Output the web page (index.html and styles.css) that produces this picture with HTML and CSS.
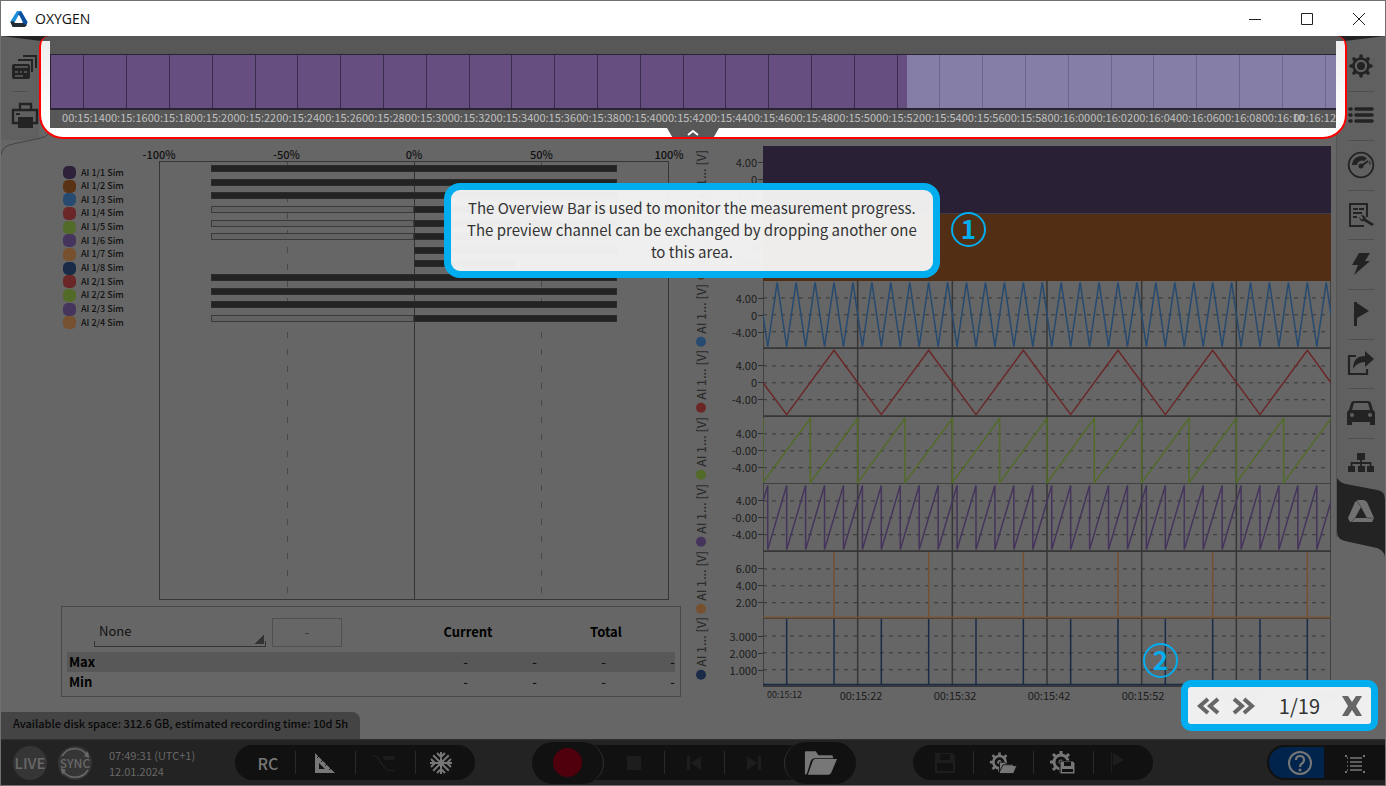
FILE: index.html
```html
<!DOCTYPE html>
<html lang="en">
<head>
  <meta charset="UTF-8" />
  <meta name="viewport" content="width=device-width, initial-scale=1.0"/>
  <title>OXYGEN</title>
  <link rel="stylesheet" href="styles.css">
</head>
<body>
  <div class="window">
    <header class="titlebar">
      <svg class="logo" viewBox="0 0 18 16">
        <path d="M7 0h4l4 7-3.500 1L9 3.500 6 9l-3 5-2-1.500-.6-2z" fill="#1c8fd6"/>
        <path d="M11 0l6.600 11-1.500 4-3-1-2-6L8 3z" fill="#0b4f9e"/>
        <path d="M.4 11L3 10l2 2h8l3.600 2-1.600 2H2.500z" fill="#222b36"/>
        <path d="M9 4l4 7.500H5z" fill="#fff"/>
      </svg>
      <h1>OXYGEN</h1>
      <div class="window-buttons">
        <button aria-label="Minimize"><svg viewBox="0 0 12 12"><path d="M0 6.500h12"/></svg></button>
        <button aria-label="Maximize"><svg viewBox="0 0 12 12"><path d="M.5.5h11v11H.5z"/></svg></button>
        <button aria-label="Close"><svg viewBox="0 0 12 12"><path d="M0 0l12 12M12 0L0 12"/></svg></button>
      </div>
    </header>

    <main class="stage">
      <nav class="rail rail-left">
        <svg class="rail-edge" viewBox="0 0 48 120"><path class="edge-top" d="M0 0h48v6z"/><path class="edge-line" d="M0 119q1-9 12-11l28-6q5-1 7-4"/></svg>
        <button aria-label="Screens">
          <svg viewBox="0 0 28 28"><path d="M12 2h14v13h-2V4H12zM7 6h15v13h-2V8H7z"/><path d="M3 11h14q2 0 2 2v11q0 2-2 2H3q-2 0-2-2V13q0-2 2-2z"/><path d="M4 14h13M4 19h3M9 19h2M13 19h3M4 23h8" stroke="#606060" stroke-width="1.500"/></svg>
        </button>
        <button aria-label="Print">
          <svg viewBox="0 0 28 28"><path d="M2 8h24v13H2z M9 2h11v6H9z" fill="none" stroke="#232323" stroke-width="2.400"/><path d="M7 15h15v11H7zM5 11h4v2H5z"/></svg>
        </button>
      </nav>

      <div class="center">
        <section class="overview">
          <div class="overview-panel">
            <div class="overview-track" id="track"></div>
            <div class="overview-times" id="times"></div>
          </div>
          <button class="overview-handle" aria-label="Collapse overview"><svg viewBox="0 0 12 7"><path d="M1 6l5-4 5 4"/></svg></button>
        </section>

        <div class="instruments">
          <section class="left-column">
            <div class="meter">
              <ul class="legend" id="legend"></ul>
              <div class="meter-main">
                <div class="meter-axis"><span>-100%</span><span>-50%</span><span>0%</span><span>50%</span><span>100%</span></div>
                <div class="meter-plot"><div class="meter-grid"><i></i><i></i><i></i><i></i></div><div class="bars" id="bars"></div></div>
              </div>
            </div>
            <div class="stats">
              <table>
                <colgroup><col><col class="value"><col class="value"><col class="value"><col class="value"></colgroup>
                <thead>
                  <tr>
                    <th>
                      <div class="stats-tools">
                        <select aria-label="Channel"><option>None</option></select>
                        <button>-</button>
                      </div>
                    </th>
                    <th colspan="2">Current</th>
                    <th colspan="2">Total</th>
                  </tr>
                </thead>
                <tbody>
                  <tr><th>Max</th><td>-</td><td>-</td><td>-</td><td>-</td></tr>
                  <tr><th>Min</th><td>-</td><td>-</td><td>-</td><td>-</td></tr>
                </tbody>
              </table>
            </div>
          </section>

          <section class="recorder">
            <div class="recorder-body">
              <div class="lane-names" id="names"></div>
              <div class="lanes" id="lanes"></div>
            </div>
            <div class="time-axis"><span>00:15:12</span><span>00:15:22</span><span>00:15:32</span><span>00:15:42</span><span>00:15:52</span><span>00:16:02</span><span>00:16:12</span></div>
          </section>
        </div>
      </div>

      <nav class="rail rail-right">
        <svg class="rail-edge" viewBox="0 0 48 120"><path class="edge-top" d="M0 6L48 0H0z"/></svg>
        <button aria-label="Settings">
          <svg viewBox="0 0 28 28"><circle cx="14" cy="14" r="7.500" fill="none" stroke="#232323" stroke-width="2.600"/><circle cx="14" cy="14" r="4"/><path d="M14 4v2M14 22v2M4 14h2M22 14h2M7 7l1 1M20 20l1 1M7 21l1-1M20 8l1-1" stroke="#232323" stroke-width="3.600" stroke-linecap="round"/></svg>
        </button>
        <button aria-label="Channel list">
          <svg viewBox="0 0 28 28"><path d="M9 8h16M9 14h16M9 20h16M3 8h1M3 14h1M3 20h1" stroke="#232323" stroke-width="3.600" stroke-linecap="round"/></svg>
        </button>
        <button aria-label="Instruments">
          <svg viewBox="0 0 28 28"><circle cx="14" cy="14" r="12.300" fill="none" stroke="#232323" stroke-width="1.800"/><path d="M5 14a9 9 0 0 1 15-6.500L17 10a5 5 0 0 0-7 4z"/><path d="M13 16l8-6" stroke="#232323" stroke-width="2"/><circle cx="14" cy="15" r="2.500"/><path d="M22 10l1.500 3.500" stroke="#3c3c3c" stroke-width="2"/></svg>
        </button>
        <button aria-label="Report">
          <svg viewBox="0 0 28 28"><path d="M20 16V3H3v22h14" fill="none" stroke="#232323" stroke-width="2"/><path d="M6 8h5M12 8h5M6 12h9M6 16h4" stroke="#232323" stroke-width="1.800"/><path d="M12 16q1 5 5 4l8 5 2-2-8-5q-1-4-5-4l2 3-1 2z"/></svg>
        </button>
        <button aria-label="Triggers">
          <svg viewBox="0 0 28 28"><path d="M12 3h11l-5 8h5L7 25l4-10H5z"/></svg>
        </button>
        <button aria-label="Events">
          <svg viewBox="0 0 28 28"><path d="M7 2h3v24H7zM10 3l12 8-12 7z"/></svg>
        </button>
        <button aria-label="Export">
          <svg viewBox="0 0 28 28"><path d="M9 7H2v18h18v-5" fill="none" stroke="#232323" stroke-width="2.200"/><path d="M6 20q0-13 12-13V2l9 8-9 8v-5q-8 0-12 7z"/></svg>
        </button>
        <button aria-label="Vehicle">
          <svg viewBox="0 0 28 28"><path fill-rule="evenodd" d="M7 2h14q2 0 3 2l2 7q2 1 2 3v12h-5v-3H5v3H0V14q0-2 2-3l2-7q1-2 3-2zm0 2l-2 7h18l-2-7zM5 14a2 2 0 1 0 0 4 2 2 0 0 0 0-4zm18 0a2 2 0 1 0 0 4 2 2 0 0 0 0-4z"/></svg>
        </button>
        <button aria-label="Network">
          <svg viewBox="0 0 28 28"><path d="M10 4h8v7h-8zM1 17h7v6H1zM11 17h7v6h-7zM20 17h7v6h-7z"/><path d="M14 11v6M4.500 17v-3h19v3" fill="none" stroke="#232323" stroke-width="1.800"/></svg>
        </button>
        <button class="active" aria-label="OXYGEN">
          <svg class="tab" viewBox="0 0 48 78" preserveAspectRatio="none"><path d="M0 0q3 5 9 6l31 6q8 1 8 9v57q-2-6-8-8L8 63q-8-2-8-9z"/></svg>
          <svg viewBox="0 0 28 28"><path fill="#717171" d="M11 2h6l3 2 7 16-2 4H3l-2-4L8 4z"/><path fill="#232323" d="M14 9l6 11H8z"/><path d="M14 9l-4-6M20 20h6M8 20l-4 4" stroke="#4a4a4a"/></svg>
        </button>
      </nav>
    </main>

    <div class="disk-row"><p>Available disk space: 312.6 GB, estimated recording time: 10d 5h</p></div>

    <footer class="toolbar">
      <div class="system">
        <button class="round">LIVE</button>
        <button class="round sync"><svg viewBox="0 0 34 34"><path d="M4 10a15 15 0 0 1 25-1M30 24a15 15 0 0 1-25 1" fill="none" stroke="#686868" stroke-width="1.500"/><path d="M31 12l-1-7-4 5zM3 22l1 7 4-5z" fill="#686868"/></svg>SYNC</button>
        <p>07:49:31 (UTC+1)<br>12.01.2024</p>
      </div>
      <div class="pill pill-a">
        <button class="rc">RC</button>
        <button aria-label="Set square"><svg viewBox="0 0 28 28"><path fill-rule="evenodd" d="M4 4l20 20H4zm4 10v6h6z"/><path d="M8 7l-2 2M12 11l-2 2M16 15l-2 2M20 19l-2 2" stroke="#111"/></svg></button>
        <button aria-label="Filter" class="off"><svg viewBox="0 0 36 28"><path d="M0 4q8 0 12 8t10 11q4 1 9 1" fill="none" stroke="#222" stroke-width="1.500"/><path d="M16 5h14v5H16z" fill="#1d1d1d"/></svg></button>
        <button aria-label="Freeze"><svg viewBox="0 0 28 28"><path d="M14 3v22M3 14h22M6.200 6.200l15.600 15.600M6.200 21.800L21.800 6.200M10 4l4 4 4-4M10 24l4-4 4 4M4 10l4 4-4 4M24 10l-4 4 4 4" fill="none" stroke="#777" stroke-width="2"/></svg></button>
      </div>
      <div class="transport">
        <button class="lobe lobe-left" aria-label="Record"><i class="record"></i></button>
        <div class="pill pill-mid">
          <button aria-label="Stop" class="off"><svg viewBox="0 0 28 28"><path d="M7 7h14v14H7z"/></svg></button>
          <button aria-label="Previous" class="off"><svg viewBox="0 0 28 28"><path d="M7 7h3v14H7zM21 7v14l-10-7z"/></svg></button>
          <button aria-label="Next" class="off"><svg viewBox="0 0 28 28"><path d="M18 7h3v14h-3zM7 7v14l10-7z"/></svg></button>
        </div>
        <button class="lobe lobe-right" aria-label="Open file"><svg viewBox="0 0 36 28"><path d="M2 26V3q0-1 1-1h10l3 4h13q2 0 2 2v1H12q-3 0-4 3L4 25z"/><path d="M12 10h23l-6 14q-1 2-3 2H5l5-14q1-2 2-2z"/></svg></button>
      </div>
      <div class="pill pill-b">
        <button aria-label="Save" class="off"><svg viewBox="0 0 28 28"><path fill-rule="evenodd" d="M4 4h17l3 3v17H4zm5 1v6h10V5zm-3 9v8h16v-8z"/></svg></button>
        <button aria-label="Load setup"><svg viewBox="0 0 32 28"><circle cx="12" cy="13" r="7" fill="none" stroke="#777" stroke-width="3"/><circle cx="12" cy="13" r="2.500"/><path d="M12 2v4M1 13h4M4 5l3 3M20 5l-3 3M4 21l3-3M12 20v4" stroke="#777" stroke-width="3"/><path d="M12 25V13h6l2 2h8v2h4l-4 9H12z" stroke="#111"/><path d="M12 24l4-8h14" fill="none" stroke="#111"/></svg></button>
        <button aria-label="Save setup"><svg viewBox="0 0 28 28"><circle cx="12" cy="13" r="7" fill="none" stroke="#777" stroke-width="3"/><circle cx="12" cy="13" r="2.500"/><path d="M12 2v4M1 13h4M4 5l3 3M20 5l-3 3M4 21l3-3M12 20v4" stroke="#777" stroke-width="3"/><path d="M11 12h13l2 2v11H11z" stroke="#111"/><path d="M15 13h7v4h-7zM13 20h11v3H13z" fill="#111"/></svg></button>
        <button aria-label="Marker" class="off"><svg viewBox="0 0 28 28"><path d="M6 3h1v21H6zM8 4l11 7-11 6z"/></svg></button>
      </div>
      <div class="help">
        <button class="help-button" aria-label="Help"><svg viewBox="0 0 28 28"><circle cx="14" cy="14" r="11" fill="none" stroke="#777" stroke-width="2"/><path d="M10 11q0-4 4-4t4 4q0 2-2 3.500-2 1-2 3.500" fill="none" stroke="#777" stroke-width="2.200"/><circle cx="14" cy="21" r="1.500"/></svg></button>
        <button aria-label="Menu"><svg viewBox="0 0 28 28"><path d="M9 9h12M9 13h12M9 17h12M9 21h12M6 9h1M6 13h1M6 17h1M6 21h1" stroke="#777" stroke-width="1.600"/><path d="M4 7h2M22 7h2M4 23h2M22 23h2" stroke="#777" stroke-width="2"/></svg></button>
      </div>
    </footer>

    <div class="hint hint-text">The Overview Bar is used to monitor the measurement progress.<br>The preview channel can be exchanged by dropping another one<br>to this area.</div>
    <div class="step step-one">1</div>
    <div class="hint pager">
      <button aria-label="Previous hint"><svg viewBox="0 0 24 18"><path d="M12 2L4 9l8 7M22 2l-8 7 8 7"/></svg></button>
      <button aria-label="Next hint"><svg viewBox="0 0 24 18"><path d="M2 2l8 7-8 7M12 2l8 7-8 7"/></svg></button>
      <span>1/19</span>
      <button aria-label="Close hint"><svg class="cross" viewBox="0 0 20 20"><path d="M0 0h6l4 6 4-6h6l-6 10 6 10h-6l-4-6-4 6H0l6-10z"/></svg></button>
    </div>
    <div class="step step-two">2</div>
  </div>
  <script src="script.js"></script>
</body>
</html>
```
FILE: styles.css
```css
* {
  box-sizing: border-box;
  margin: 0;
  padding: 0;
}
body {
  font-family: "Noto Sans CJK SC", "Open Sans", sans-serif;
  font-size: 11px;
  line-height: 16px;
  color: #111;
  background: #666;
}
button {
  font: inherit;
  color: inherit;
  background: none;
  border: none;
  cursor: pointer;
}
svg {
  display: block;
}
.window {
  position: relative;
  display: flex;
  flex-direction: column;
  min-height: 100vh;
  border: 1px solid #707070;
  background: #666;
  overflow: hidden;
}

/* title bar */
.titlebar {
  display: flex;
  align-items: center;
  height: 35px;
  padding-left: 9px;
  background: #fff;
}
.logo {
  width: 18px;
  height: 16px;
  margin-right: 7px;
}
.titlebar h1 {
  font: 14px "Open Sans", sans-serif;
  color: #111;
}
.window-buttons {
  display: flex;
  margin-left: auto;
}
.window-buttons button {
  display: grid;
  place-items: center;
  width: 52px;
  height: 34px;
}
.window-buttons svg {
  width: 12px;
  height: 12px;
  fill: none;
  stroke: #222;
}

/* stage */
.stage {
  display: flex;
  align-items: flex-start;
  flex: 1;
}
.center {
  display: flex;
  flex-direction: column;
  flex: 1;
  align-self: stretch;
  min-width: 0;
}
.rail {
  position: relative;
  display: grid;
  grid-auto-rows: 1fr;
  background: #606060;
}
.rail button {
  position: relative;
  display: grid;
  place-items: center;
}
.rail button + button::before {
  content: "";
  position: absolute;
  top: 0;
  left: 11px;
  right: 11px;
  height: 1px;
  background: #4f4f4f;
}
.rail button svg {
  width: 28px;
  height: 28px;
  fill: #232323;
}
.rail-left {
  width: 38px;
  height: 104px;
  padding-top: 6px;
}
.rail-left button {
  padding-left: 10px;
}
.rail-edge {
  position: absolute;
  top: 0;
  left: 0;
  width: 48px;
  height: 120px;
}
.edge-top {
  fill: #232323;
}
.edge-line {
  fill: #666;
  stroke: #444;
}
.rail-right {
  width: 49px;
  height: 501px;
  padding-top: 5px;
  border-left: 1px solid #555;
}
.rail-right .active::before {
  display: none;
}
.rail-right .active svg {
  position: relative;
}
.rail-right .active .tab {
  position: absolute;
  top: -9px;
  left: 0;
  width: 48px;
  height: 78px;
}

/* overview bar */
.overview {
  position: relative;
  z-index: 1;
  display: flex;
  flex-direction: column;
  margin-right: -11px;
  padding: 0 9px;
  border: 2px solid #f00;
  border-top: none;
  border-radius: 10px 10px 24px 24px;
  background: linear-gradient(#575757 5px, #eee 5px, #fff 90px);
}
.overview-panel {
  padding-top: 18px;
  background: #575757;
}
.overview-track {
  display: flex;
  height: 56px;
  border: 1px solid #2b2233;
  border-width: 1px 0 2px 1px;
  background: linear-gradient(to right, #664e80 66.650%, #857ea6 66.650%);
}
.overview-track i {
  flex: 0 0 3.331%;
  border-right: 1px solid #392b4a;
}
.overview-track i:first-child {
  flex-basis: 2.600%;
}
.overview-track i.ahead {
  border-color: #6c668c;
}
.overview-times {
  position: relative;
  display: flex;
  height: 18px;
  padding-left: 12px;
  line-height: 14px;
  color: #c0c0c0;
}
.overview-times span {
  display: flex;
  justify-content: center;
  flex: 0 0 3.364%;
  width: 0;
}
.overview-times span:last-child {
  position: absolute;
  right: 0;
  width: auto;
}
.overview-handle {
  align-self: center;
  display: grid;
  place-items: center;
  width: 52px;
  height: 9px;
  background: #575757;
  clip-path: polygon(0 0, 100% 0, 90% 100%, 10% 100%);
}
.overview-handle svg {
  width: 12px;
  height: 7px;
  fill: none;
  stroke: #fff;
  stroke-width: 2;
}

/* instruments */
.instruments {
  display: grid;
  grid-template-columns: 620fr 650fr;
  flex: 1;
  padding: 7px 5px 10px 22px;
}
.left-column {
  display: flex;
  flex-direction: column;
  padding-bottom: 5px;
}
.meter {
  display: flex;
  flex: 1;
  min-height: 300px;
}
.legend {
  display: grid;
  width: 98px;
  height: 164px;
  margin-top: 20px;
  list-style: none;
  font-size: 9px;
  font-weight: 500;
}
.legend li {
  display: flex;
  align-items: center;
  gap: 5px;
  height: 13px;
  padding-left: 2px;
}
.legend i {
  width: 13px;
  height: 13px;
  border-radius: 5px;
}
.meter-main {
  display: flex;
  flex-direction: column;
  flex: 1;
  margin-right: 12px;
}
.meter-axis {
  display: flex;
  justify-content: space-between;
  height: 15px;
  font-weight: 500;
}
.meter-axis span {
  display: flex;
  justify-content: center;
  width: 0;
}
.meter-plot {
  position: relative;
  flex: 1;
  border: 1px solid #363636;
}
.meter-grid {
  position: absolute;
  inset: 0;
  display: grid;
  grid-template-columns: repeat(4, 1fr);
}
.meter-grid i {
  margin-right: -1px;
  background: repeating-linear-gradient(#484848 0 6px, transparent 6px 17px) right / 1px 100% no-repeat;
}
.meter-grid i:nth-child(2) {
  background: linear-gradient(#333, #333) right / 1px 100% no-repeat;
}
.meter-grid i:last-child {
  background: none;
}
.bars {
  position: relative;
  display: grid;
  grid-auto-rows: 1fr;
  height: 163px;
}
.bar {
  display: flex;
  align-items: center;
}
.bar i {
  height: 7px;
  border: 1px solid #3a3a3a;
  background: #626262;
}
.bar i.solid {
  border-color: #2b2b2b;
  background: #232323;
}
.stats {
  margin-top: 6px;
  padding: 0 5px 4px;
  border: 1px solid #484848;
}
.stats table {
  width: 100%;
  border-collapse: collapse;
  table-layout: fixed;
  font-size: 13px;
  line-height: 20px;
}
.stats .value {
  width: 69px;
}
.stats thead th {
  height: 45px;
  padding-top: 5px;
  color: #000;
}
.stats tbody th {
  padding-left: 2px;
  text-align: left;
  color: #000;
}
.stats td {
  text-align: right;
  font-weight: 500;
}
.stats tbody tr:first-child {
  background: #585858;
}
.stats-tools {
  display: flex;
  align-items: flex-end;
  gap: 6px;
  padding-left: 27px;
}
.stats-tools select {
  width: 172px;
  height: 28px;
  padding: 0 5px 4px;
  appearance: none;
  font: 13px "Noto Sans CJK SC", sans-serif;
  color: #111;
  border: none;
  border-bottom: 1px solid #333;
  background: linear-gradient(135deg, transparent 50%, #333 50%) right 2px bottom 2px / 10px 9px no-repeat, linear-gradient(#333, #333) left bottom / 1px 5px no-repeat, linear-gradient(#333, #333) right bottom / 1px 5px no-repeat;
}
.stats-tools button {
  width: 70px;
  height: 29px;
  border: 1px solid #505050;
  color: #333;
  font-weight: 400;
}

/* recorder */
.recorder {
  display: flex;
  flex-direction: column;
  padding-left: 11px;
}
.recorder-body {
  display: flex;
  flex: 1;
}
.lane-names {
  display: grid;
  grid-auto-rows: 1fr;
  width: 18px;
  margin-bottom: 7px;
}
.lanes {
  display: grid;
  grid-auto-rows: 1fr;
  flex: 1;
}
.lane-name {
  display: flex;
  align-items: center;
  gap: 3px;
  min-height: 0;
  writing-mode: vertical-rl;
  transform: rotate(180deg);
  font-size: 12px;
  font-weight: 500;
  line-height: 18px;
  color: #2c2c2c;
  white-space: nowrap;
}
.lane-name i {
  width: 10px;
  height: 10px;
  border-radius: 50%;
}
.lane {
  display: grid;
  grid-template-columns: 53px 1fr;
}
.scale {
  display: flex;
  flex-direction: column;
  justify-content: center;
  line-height: 17px;
  color: #1c1c1c;
}
.scale span {
  display: flex;
  align-items: center;
  justify-content: flex-end;
  gap: 1px;
}
.scale span::after {
  content: "";
  width: 5px;
  height: 1px;
  background: #333;
}
.plot {
  position: relative;
}
.plot svg {
  position: absolute;
  inset: 0;
  width: 100%;
  height: 100%;
  fill: none;
  stroke-width: 1.500;
}
.plot path {
  vector-effect: non-scaling-stroke;
}
.plot .frame {
  stroke: #363636;
}
.plot .base {
  stroke: #363636;
  stroke-width: 3;
}
.plot .dashes {
  stroke: #383838;
  stroke-width: 1;
  stroke-dasharray: 4 5;
}
.time-axis {
  display: flex;
  justify-content: space-between;
  height: 15px;
  margin-left: 71px;
  color: #1c1c1c;
}
.time-axis span {
  display: flex;
  justify-content: center;
  width: 0;
}
.time-axis span:first-child {
  justify-content: flex-start;
  padding-left: 4px;
  font-size: 9px;
}

/* bottom area */
.disk-row {
  display: flex;
}
.disk-row p {
  height: 27px;
  padding: 0 12px;
  border-radius: 0 8px 0 0;
  background: #444;
  color: #080808;
  font-size: 11px;
  font-weight: 500;
  line-height: 22px;
}
.toolbar {
  display: grid;
  grid-template-columns: 234px auto 1fr auto 1fr auto 2fr auto;
  align-items: center;
  height: 46px;
  border-top: 1px solid #303030;
  background: #232323;
  color: #777;
}
.toolbar svg {
  width: 28px;
  height: 28px;
  fill: #777;
}
.toolbar button {
  display: grid;
  place-items: center;
}
.toolbar .off svg {
  fill: #1d1d1d;
}
.system {
  display: flex;
  align-items: center;
  gap: 11px;
  padding-left: 12px;
  color: #686868;
}
.system .round {
  position: relative;
  width: 34px;
  height: 34px;
  border-radius: 50%;
  background: #353535;
  font-size: 15px;
  font-weight: 500;
}
.system .sync {
  font-size: 12px;
}
.system .sync svg {
  position: absolute;
  inset: 0;
  width: 34px;
  height: 34px;
}
.system p {
  padding-left: 6px;
}
.pill {
  display: flex;
  height: 35px;
  border-radius: 18px;
  background: #111;
}
.pill button {
  position: relative;
  width: 60px;
}
.pill button + button::before {
  content: "";
  position: absolute;
  top: 6px;
  bottom: 6px;
  left: 0;
  width: 1px;
  background: #2a2a2a;
}
.pill-a {
  grid-column: 2;
}
.pill-b {
  grid-column: 6;
}
.pill .rc {
  padding-left: 6px;
  font-size: 16px;
  font-weight: 500;
}
.pill button:first-child svg {
  margin-left: 4px;
}
.pill-a button:last-child svg,
.pill-b button:last-child svg {
  margin-right: 8px;
}
.transport {
  grid-column: 4;
  display: flex;
  align-items: center;
}
.lobe {
  position: relative;
  z-index: 1;
  width: 72px;
  height: 42px;
  border-radius: 21px;
  background: #111;
}
.lobe-left {
  border-right: 1px solid #303030;
}
.lobe-right {
  border-left: 1px solid #303030;
}
.lobe-right svg {
  width: 35px;
}
.record {
  width: 29px;
  height: 29px;
  border-radius: 50%;
  background: #50000c;
}
.pill-mid {
  border-radius: 0;
  box-shadow: -10px 0 #111, 10px 0 #111;
}
.pill-mid button:first-child svg {
  margin: 0;
}
.help {
  grid-column: 8;
  display: flex;
  height: 35px;
  padding: 2px 0 2px 2px;
  border-radius: 18px 0 0 18px;
  background: #111;
}
.help button {
  width: 61px;
}
.help .help-button {
  width: 55px;
  padding-left: 6px;
  border-radius: 16px 0 0 16px;
  background: #00244c;
}

/* hints on top */
.hint {
  position: absolute;
  z-index: 2;
  border: 7px solid #00aeef;
  border-radius: 16px;
  background: rgba(245, 245, 245, 0.96);
  color: #333;
}
.hint-text {
  top: 182px;
  left: 32%;
  width: 496px;
  padding: 7px 8px 8px;
  font-size: 15px;
  line-height: 22px;
  text-align: center;
}
.pager {
  right: 7px;
  bottom: 54px;
  display: flex;
  align-items: center;
  height: 51px;
  padding: 0 9px 0 8px;
  border-radius: 10px;
  font-size: 20px;
}
.pager svg {
  width: 24px;
  height: 18px;
  fill: none;
  stroke: #666;
  stroke-width: 4;
}
.pager button + button {
  margin-left: 12px;
}
.pager span {
  margin: 0 10px 0 23px;
}
.pager span + button {
  margin-left: 12px;
}
.pager .cross {
  width: 20px;
  height: 20px;
  fill: #666;
  stroke: none;
}
.step {
  position: absolute;
  z-index: 2;
  width: 35px;
  height: 35px;
  border: 2px solid #00aeef;
  border-radius: 50%;
  color: #00aeef;
  font-size: 26px;
  font-weight: 700;
  line-height: 27px;
  text-align: center;
}
.step-one {
  top: 211px;
  left: calc(32% + 507px);
}
.step-two {
  right: 207px;
  bottom: 107px;
}
```
FILE: script.js
```js
const channels = [
  { name: "AI 1/1 Sim", color: "#2d2239", bar: [10, 90] },
  { name: "AI 1/2 Sim", color: "#5a3314", bar: [10, 90] },
  { name: "AI 1/3 Sim", color: "#274a70", bar: [10, 90] },
  { name: "AI 1/4 Sim", color: "#6b2727", bar: [50, 90], range: 40 },
  { name: "AI 1/5 Sim", color: "#526b28", bar: [50, 90], range: 40 },
  { name: "AI 1/6 Sim", color: "#45345c", bar: [50, 90], range: 40 },
  { name: "AI 1/7 Sim", color: "#76502f", bar: [50, 90] },
  { name: "AI 1/8 Sim", color: "#1a2b47", bar: [50, 70] },
  { name: "AI 2/1 Sim", color: "#6b2727", bar: [10, 90] },
  { name: "AI 2/2 Sim", color: "#526b28", bar: [10, 90] },
  { name: "AI 2/3 Sim", color: "#45345c", bar: [10, 90] },
  { name: "AI 2/4 Sim", color: "#76502f", bar: [50, 90], range: 40 }
];

const volts = ["4.00", "0", "-4.00"];
const lanes = [
  { wave: "fill", fill: "#2a2035", scale: volts },
  { wave: "fill", fill: "#522f14", scale: volts },
  { wave: "triangle", period: 2, scale: volts },
  { wave: "triangle", period: 10, scale: volts },
  { wave: "saw", period: 5, start: 0, scale: ["4.00", "-0.00", "-4.00"] },
  { wave: "saw", period: 2, start: 0.5, scale: ["4.00", "-0.00", "-4.00"] },
  { wave: "pulse", period: 10, start: 7.5, scale: ["6.00", "4.00", "2.00"] },
  { wave: "pulse", period: 5, start: 2.5, scale: ["3.000", "2.000", "1.000"] }
];

// x is in tenths of a second, y runs from 0 (top) to 100
const span = 600;

function wavePath(lane) {
  const step = lane.period * 10;
  if (lane.wave === "triangle") {
    let d = "M0 50";
    for (let x = step / 4, low = true; x <= span; x += step / 2, low = !low) {
      d += `L${x} ${low ? 97 : 2}`;
    }
    return d + `L${span} 50`;
  }
  const start = lane.start * 10;
  if (lane.wave === "saw") {
    let d = start ? `M0 ${2 + 95 * start / step}L${start} 2` : "M0 2";
    for (let x = start; x < span; x += step) {
      const end = Math.min(x + step, span);
      d += `L${x} 97L${end} ${97 - 95 * (end - x) / step}`;
    }
    return d;
  }
  let d = `M0 97H${span}`;
  for (let x = start; x < span; x += step) {
    d += `M${x} 0V98`;
  }
  return d;
}

function lanePlot(lane, color) {
  const open = `<svg viewBox="0 0 ${span} 100" preserveAspectRatio="none">`;
  if (lane.wave === "fill") {
    return `${open}<rect width="${span}" height="100" fill="${lane.fill}"/></svg>`;
  }
  return `${open}
    <path class="dashes" d="M0 25H600M0 50H600M0 75H600"/>
    <path class="frame" d="M0 0V100M100 0V100M200 0V100M300 0V100M400 0V100M500 0V100M600 0V100"/>
    <path class="base" d="M0 100H600"/>
    <path stroke="${color}" d="${wavePath(lane)}"/>
  </svg>`;
}

document.getElementById("legend").innerHTML = channels.map(c =>
  `<li><i style="background:${c.color}"></i>${c.name}</li>`).join("");

document.getElementById("bars").innerHTML = channels.map(c => {
  const [from, to] = c.bar;
  const range = c.range || 0;
  return `<div class="bar">
    <b style="width:${from - range}%"></b>
    ${range ? `<i style="width:${range}%"></i>` : ""}
    <i class="solid" style="width:${to - from}%"></i>
  </div>`;
}).join("");

document.getElementById("names").innerHTML = lanes.map((lane, i) =>
  `<div class="lane-name"><i style="background:${channels[i].color}"></i>AI 1... [V]</div>`).join("");

document.getElementById("lanes").innerHTML = lanes.map((lane, i) => `<div class="lane">
    <div class="scale">${lane.scale.map(s => `<span>${s}</span>`).join("")}</div>
    <div class="plot">${lanePlot(lane, channels[i].color)}</div>
  </div>`).join("");

// overview runs from 00:15:14 to 00:16:12, one mark every two seconds
let marks = "";
let times = "";
for (let s = 14; s <= 72; s += 2) {
  const minute = 15 + Math.floor(s / 60);
  times += `<span>00:${minute}:${String(s % 60).padStart(2, "0")}</span>`;
  marks += `<i${s > 52 ? ' class="ahead"' : ""}></i>`;
}
document.getElementById("track").innerHTML = marks;
document.getElementById("times").innerHTML = times;
```
